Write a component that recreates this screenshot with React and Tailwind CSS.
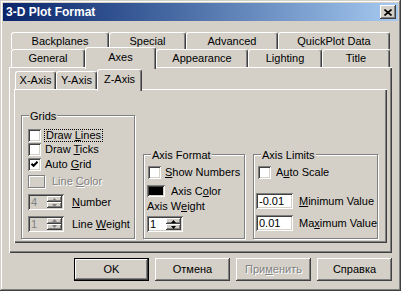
import React from "react";

const frame = "shadow-[inset_-1px_-1px_#404040,inset_1px_1px_#d4d0c8,inset_-2px_-2px_#808080,inset_2px_2px_#ffffff]";
const raised = "shadow-[inset_-1px_-1px_#404040,inset_1px_1px_#ffffff,inset_-2px_-2px_#808080]";
const sunken = "shadow-[inset_1px_1px_#808080,inset_-1px_-1px_#ffffff,inset_2px_2px_#404040,inset_-2px_-2px_#d4d0c8]";
const pane = "shadow-[inset_1px_1px_#ffffff,inset_-1px_-1px_#404040,inset_-2px_-2px_#808080]";
const grayText = "text-[#808080] [text-shadow:1px_1px_0_#ffffff]";

function U({ children }) {
  return <span className="underline">{children}</span>;
}

function Tab({ className, selected, children }) {
  return (
    <div
      className={`flex items-center justify-center shrink-0 whitespace-nowrap bg-[#d4d0c8] border-l border-t border-white border-r border-r-[#404040] rounded-t-[3px] shadow-[inset_-1px_0_#808080] ${
        selected ? "relative z-10 h-[22px] -mb-[2px] pb-[3px]" : "h-full"
      } ${className}`}
    >
      {children}
    </div>
  );
}

function Check({ checked }) {
  return (
    <div className={`w-[13px] h-[13px] shrink-0 bg-white flex items-center justify-center ${sunken}`}>
      {checked && (
        <svg width="7" height="7" viewBox="0 0 7 7">
          <polyline points="0.5,2.8 2.5,4.8 6.5,0.8" fill="none" stroke="#000" strokeWidth="2" />
        </svg>
      )}
    </div>
  );
}

function SpinBtn({ up, disabled }) {
  return (
    <div className={`flex-1 flex items-center justify-center bg-[#d4d0c8] ${raised}`}>
      <svg width="5" height="3" viewBox="0 0 5 3">
        <polygon
          points={up ? "2.5,0 5,3 0,3" : "0,0 5,0 2.5,3"}
          fill={disabled ? "#808080" : "#000"}
        />
      </svg>
    </div>
  );
}

function Spin({ value, disabled }) {
  return (
    <div className={`flex w-[36px] h-[16px] shrink-0 p-[2px] ${disabled ? "bg-[#d4d0c8]" : "bg-white"} ${sunken}`}>
      <span className={`flex-1 pl-[1px] leading-[12px] ${disabled ? "text-[#808080]" : ""}`}>{value}</span>
      <div className="flex flex-col w-[15px]">
        <SpinBtn up disabled={disabled} />
        <SpinBtn disabled={disabled} />
      </div>
    </div>
  );
}

function Group({ label, className, children }) {
  return (
    <div className={`relative shrink-0 whitespace-nowrap border border-[#808080] shadow-[inset_1px_1px_#ffffff,1px_1px_#ffffff] ${className}`}>
      <span className="absolute -top-[6px] left-[7px] px-[1px] bg-[#d4d0c8] leading-[13px]">{label}</span>
      {children}
    </div>
  );
}

function Button({ children, isDefault, disabled }) {
  return (
    <div
      className={`w-[75px] h-[23px] flex items-center justify-center bg-[#d4d0c8] ${
        isDefault
          ? "border border-black shadow-[inset_-1px_-1px_#404040,inset_1px_1px_#ffffff,inset_-2px_-2px_#808080]"
          : raised
      } ${disabled ? grayText : ""}`}
    >
      {children}
    </div>
  );
}

export default function App() {
  return (
    <div
      className={`w-[401px] h-[291px] bg-[#d4d0c8] p-[3px] flex flex-col text-[11px] text-black font-['Liberation_Sans',Arial,sans-serif] ${frame}`}
    >
      <div className="h-[18px] shrink-0 flex items-center justify-between pl-[3px] pr-[2px] bg-linear-to-r from-[#0a246a] to-[#a6caf0]">
        <span className="text-white font-bold text-[12px] leading-none">3-D Plot Format</span>
        <div className={`w-[16px] h-[14px] flex items-center justify-center bg-[#d4d0c8] ${raised}`}>
          <svg width="8" height="7" viewBox="0 0 8 7">
            <path d="M0.5 0.5 L7.5 6.5 M7.5 0.5 L0.5 6.5" stroke="#000" strokeWidth="1.6" />
          </svg>
        </div>
      </div>

      <div className="px-[6px] pt-[11px]">
        <div className="flex h-[17px] pl-[2px]">
          <Tab className="w-[98px]">Backplanes</Tab>
          <Tab className="w-[77px]">Special</Tab>
          <Tab className="w-[92px]">Advanced</Tab>
          <Tab className="w-[112px]">QuickPlot Data</Tab>
        </div>
        <div className="flex items-end h-[18px] pl-[2px]">
          <Tab className="w-[74px]">General</Tab>
          <Tab className="w-[71px]" selected>Axes</Tab>
          <Tab className="w-[92px]">Appearance</Tab>
          <Tab className="w-[74px]">Lighting</Tab>
          <Tab className="w-[68px]">Title</Tab>
        </div>

        <div className={`h-[186px] pt-[4px] px-[5px] pb-[10px] flex flex-col ${pane}`}>
          <div className="flex items-end h-[18px] pl-[1px] shrink-0">
            <Tab className="w-[41px]">X-Axis</Tab>
            <Tab className="w-[41px]">Y-Axis</Tab>
            <Tab className="w-[45px]" selected>Z-Axis</Tab>
          </div>

          <div className={`flex-1 flex items-end gap-[8px] pl-[7px] pb-[4px] ${pane}`}>
            <Group label="Grids" className="w-[114px] h-[124px] pt-[13px] pl-[6px] flex flex-col">
              <div className="flex items-center h-[13px]">
                <Check />
                <span className="ml-[3px] px-[1px] border border-dotted border-black leading-[11px]">
                  Draw <U>L</U>ines
                </span>
              </div>
              <div className="flex items-center h-[13px] mt-[1px]">
                <Check />
                <span className="ml-[4px]">
                  Draw <U>T</U>icks
                </span>
              </div>
              <div className="flex items-center h-[13px] mt-[2px]">
                <Check checked />
                <span className="ml-[4px]">
                  Auto <U>G</U>rid
                </span>
              </div>
              <div className="flex items-center h-[13px] mt-[4px]">
                <div className="w-[17px] h-[13px] border border-[#808080] shadow-[inset_1px_1px_#ffffff,1px_1px_#ffffff]" />
                <span className={`ml-[7px] ${grayText}`}>
                  Line <U>C</U>olor
                </span>
              </div>
              <div className="flex items-center mt-[6px]">
                <Spin value="4" disabled />
                <span className="ml-[8px]">
                  <U>N</U>umber
                </span>
              </div>
              <div className="flex items-center mt-[5px]">
                <Spin value="1" disabled />
                <span className="ml-[8px]">
                  Line <U>W</U>eight
                </span>
              </div>
            </Group>

            <Group label="Axis Format" className="w-[102px] h-[85px] pt-[11px] pl-[3px] flex flex-col">
              <div className="flex items-center h-[13px] pl-[1px]">
                <Check />
                <span className="ml-[4px]">
                  <U>S</U>how Numbers
                </span>
              </div>
              <div className="flex items-center mt-[6px]">
                <div className={`w-[18px] h-[12px] bg-black ${sunken}`} />
                <span className="ml-[6px] leading-[12px]">
                  Axis C<U>o</U>lor
                </span>
              </div>
              <div className="mt-[3px] leading-[13px]">
                Axis W<U>e</U>ight
              </div>
              <div className="mt-[3px]">
                <Spin value="1" />
              </div>
            </Group>

            <Group label="Axis Limits" className="w-[125px] h-[85px] pt-[11px] pl-[2px] flex flex-col">
              <div className="flex items-center h-[13px] pl-[2px]">
                <Check />
                <span className="ml-[5px]">
                  A<U>u</U>to Scale
                </span>
              </div>
              <div className="flex items-center mt-[14px]">
                <div className={`w-[37px] h-[16px] shrink-0 bg-white pl-[3px] leading-[16px] ${sunken}`}>-0.01</div>
                <span className="ml-[6px]">
                  <U>M</U>inimum Value
                </span>
              </div>
              <div className="flex items-center mt-[5px]">
                <div className={`w-[37px] h-[16px] shrink-0 bg-white pl-[3px] leading-[16px] ${sunken}`}>0.01</div>
                <span className="ml-[6px]">
                  Ma<U>x</U>imum Value
                </span>
              </div>
            </Group>
          </div>
        </div>
      </div>

      <div className="flex justify-end gap-[6px] pr-[6px] pt-[5px]">
        <Button isDefault>OK</Button>
        <Button>Отмена</Button>
        <Button disabled>
          <span>
            При<U>м</U>енить
          </span>
        </Button>
        <Button>Справка</Button>
      </div>
    </div>
  );
}
